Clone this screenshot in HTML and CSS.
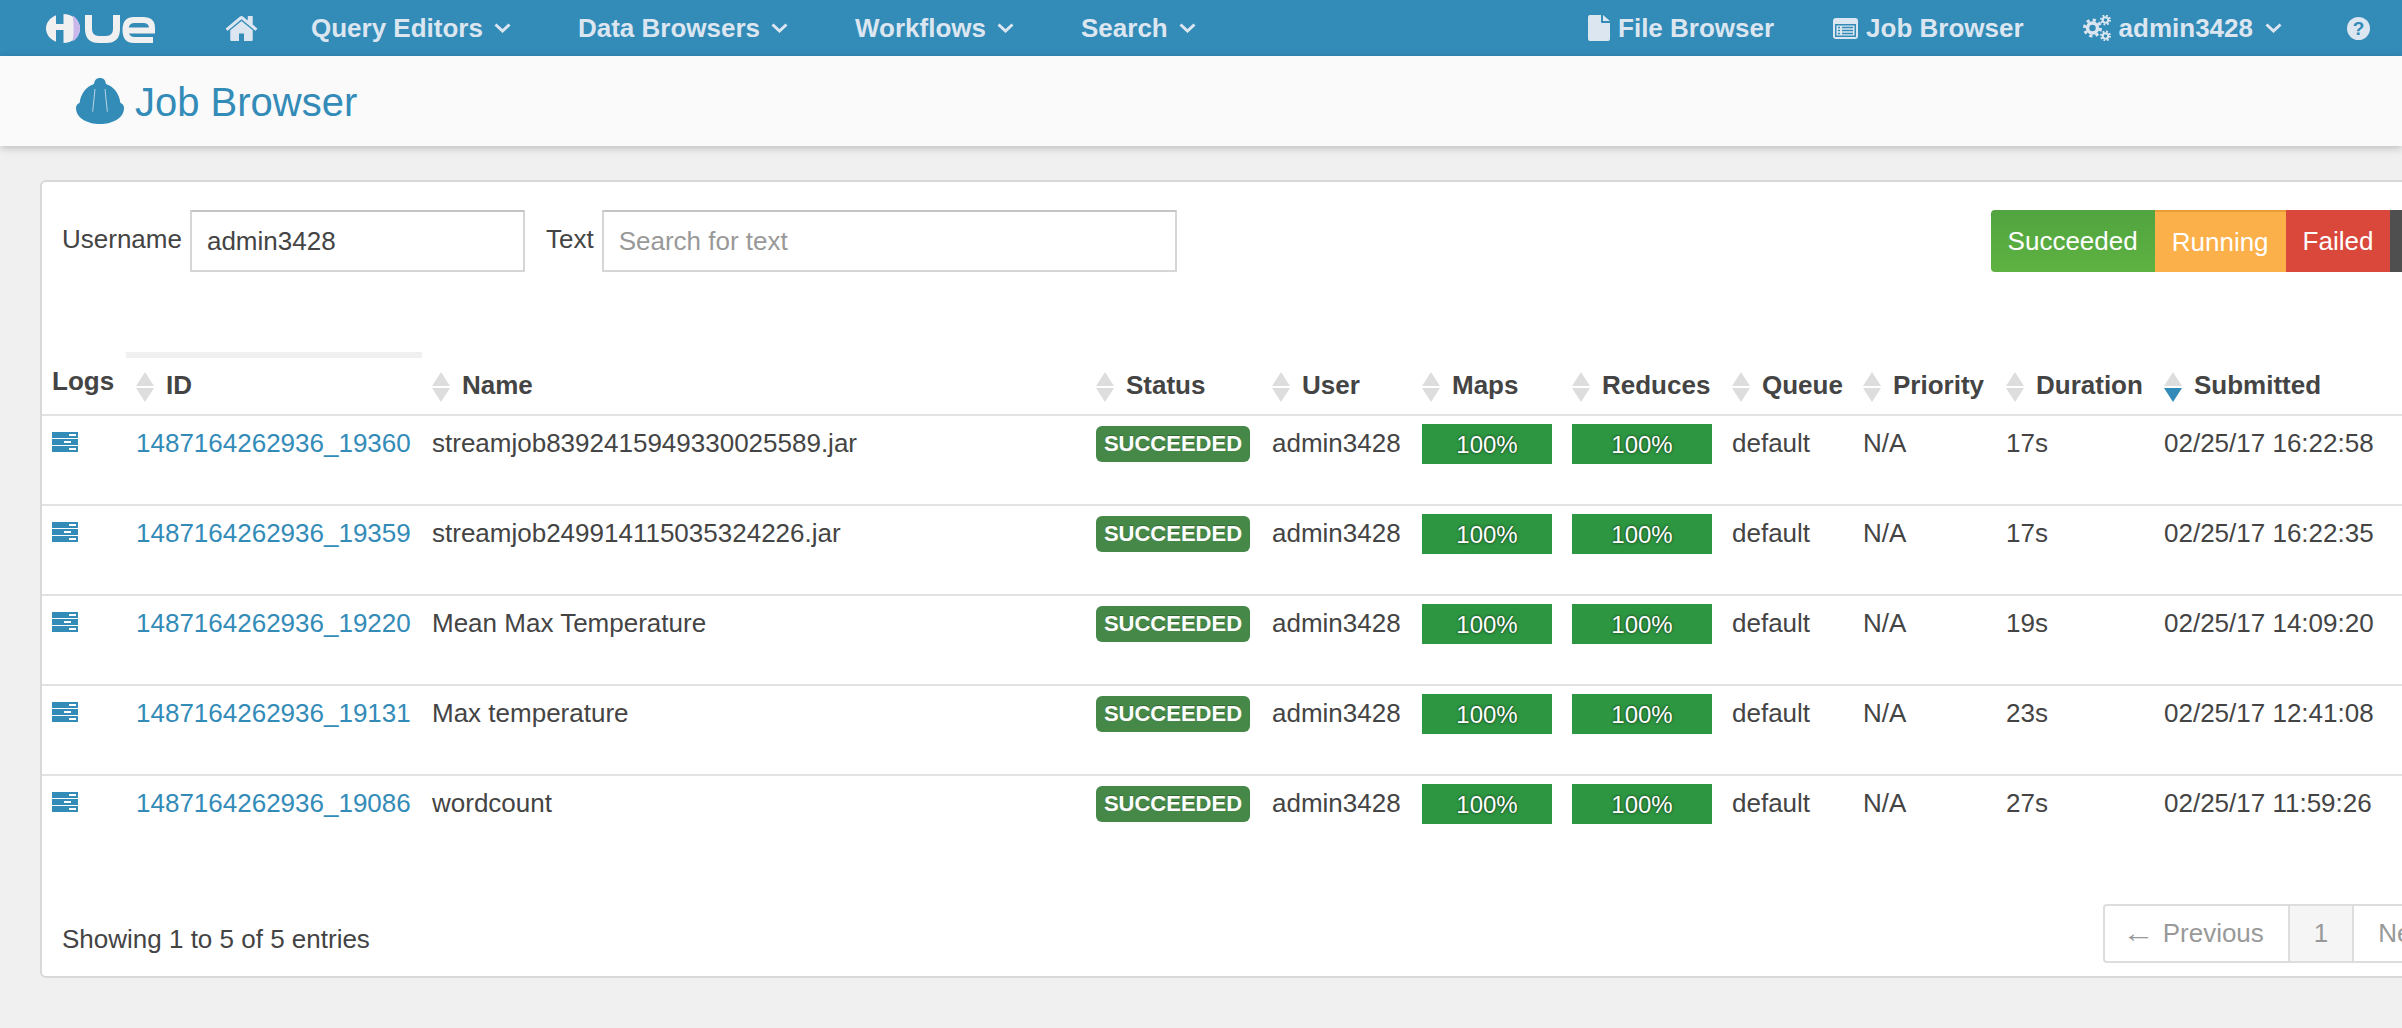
FILE: index.html

```html
<!DOCTYPE html>
<html lang="en">
<head>
    <meta charset="utf-8">
    <title>Job Browser</title>
    <link rel="stylesheet" href="styles.css">
</head>
<body>
<nav class="top-nav">
    <div class="nav-left">
        <svg class="logo" width="110" height="29" viewBox="0 0 110 29">
            <ellipse cx="17" cy="14.500" rx="17" ry="14.500" fill="#f0f0f0"/>
            <path d="M26.500 1.500 C31 4 34 9 34 14.500 C34 20 31 25 26.500 27.500 C28 20 28 9 26.500 1.500Z" fill="#c9b8ea"/>
            <rect x="10" y="0" width="7.500" height="10" fill="#338bb8"/>
            <rect x="10" y="16" width="7.500" height="13" fill="#338bb8"/>
            <path d="M42.500 1 V15 Q42.500 25.500 53 25.500 H60 Q70.500 25.500 70.500 15 V1" fill="none" stroke="#f0f0f0" stroke-width="7"/>
            <path d="M107 26 H88 Q79.500 26 79.500 16 Q79.500 6 88 6 H97 Q106 6 106 14 V16.500 H80" fill="none" stroke="#f0f0f0" stroke-width="6"/>
        </svg>
        <a class="home-link" href="#">
            <svg width="35" height="35" viewBox="0 0 1792 1792"><path fill="#dce6f0" d="M1472 992v480q0 26-19 45t-45 19h-384v-384h-256v384h-384q-26 0-45-19t-19-45v-480q0-1 .5-3t.5-3l575-474 575 474q1 2 1 6zm223-69l-62 74q-8 9-21 11h-3q-13 0-21-7l-692-577-692 577q-12 8-24 7-13-2-21-11l-62-74q-8-10-7-23.500t11-21.500l719-599q32-26 76-26t76 26l244 204v-195q0-14 9-23t23-9h192q14 0 23 9t9 23v408l219 182q10 8 11 21.500t-7 23.500z"/></svg>
        </a>
        <div class="nav-menu">
            <a class="nav-link" href="#">Query Editors <svg class="chevron" width="17" height="10" viewBox="0 0 17 10"><path d="M1.500 1.500 L8.500 8 L15.500 1.500"/></svg></a>
            <a class="nav-link" href="#">Data Browsers <svg class="chevron" width="17" height="10" viewBox="0 0 17 10"><path d="M1.500 1.500 L8.500 8 L15.500 1.500"/></svg></a>
            <a class="nav-link" href="#">Workflows <svg class="chevron" width="17" height="10" viewBox="0 0 17 10"><path d="M1.500 1.500 L8.500 8 L15.500 1.500"/></svg></a>
            <a class="nav-link" href="#">Search <svg class="chevron" width="17" height="10" viewBox="0 0 17 10"><path d="M1.500 1.500 L8.500 8 L15.500 1.500"/></svg></a>
        </div>
    </div>
    <div class="nav-right">
        <a class="nav-link tight" href="#">
            <svg width="22" height="26" viewBox="0 0 22 26"><path fill="#dce6f0" d="M2 0h11v7a1 1 0 0 0 1 1h8v16a2 2 0 0 1-2 2H2a2 2 0 0 1-2-2V2a2 2 0 0 1 2-2z M15 0l7 6h-7z"/></svg>
            File Browser
        </a>
        <a class="nav-link tight" href="#">
            <svg width="25" height="21" viewBox="0 0 25 21">
                <rect width="25" height="21" rx="3" fill="#dce6f0"/>
                <rect x="2" y="6" width="21" height="13" fill="#338bb8"/>
                <rect x="3.500" y="7.500" width="18" height="10" fill="#dce6f0"/>
                <path d="M5 9.500h2M5 12.500h2M5 15.500h2M9 9.500h11M9 12.500h11M9 15.500h11" stroke="#338bb8" stroke-width="1.400"/>
            </svg>
            Job Browser
        </a>
        <a class="nav-link tight" href="#">
            <svg width="28" height="26" viewBox="0 0 28 26" fill="none" stroke="#dce6f0">
                <circle cx="9.500" cy="13" r="5" stroke-width="3.500"/>
                <circle cx="9.500" cy="13" r="8" stroke-width="3" stroke-dasharray="3.140 3.140"/>
                <circle cx="22.500" cy="5" r="2.800" stroke-width="2"/>
                <circle cx="22.500" cy="5" r="4.500" stroke-width="2" stroke-dasharray="1.770 1.770"/>
                <circle cx="22.500" cy="21" r="2.800" stroke-width="2"/>
                <circle cx="22.500" cy="21" r="4.500" stroke-width="2" stroke-dasharray="1.770 1.770"/>
            </svg>
            admin3428 <svg class="chevron" width="17" height="10" viewBox="0 0 17 10"><path d="M1.500 1.500 L8.500 8 L15.500 1.500"/></svg>
        </a>
        <a class="help-link" href="#">?</a>
    </div>
</nav>

<header class="sub-header">
    <svg width="48" height="46" viewBox="0 0 144 138">
        <path fill="#338bb8" d="M72 0 C83 0 88 6 90 18 C114 26 130 48 133 74 C140 77 144 82 144 90 C144 120 110 138 72 138 C34 138 0 120 0 90 C0 82 4 77 11 74 C14 48 30 26 54 18 C56 6 61 0 72 0Z"/>
        <path d="M57 33 L50 101 M87 33 L94 101" stroke="#fafafa" stroke-width="2" fill="none"/>
    </svg>
    <h1 class="page-title">Job Browser</h1>
</header>

<main class="page-body">
    <section class="card">
        <div class="toolbar">
            <form class="filters">
                <label class="filter-label" for="username">Username</label>
                <input class="filter-input user-input" id="username" type="text" value="admin3428">
                <label class="filter-label text-label" for="text-search">Text</label>
                <input class="filter-input text-input" id="text-search" type="text" placeholder="Search for text">
            </form>
            <div class="btn-group">
                <button class="btn btn-succeeded">Succeeded</button>
                <button class="btn btn-running">Running</button>
                <button class="btn btn-failed">Failed</button>
                <button class="btn btn-killed">Killed</button>
            </div>
        </div>

        <table class="jobs-table">
            <colgroup>
                <col class="col-logs">
                <col class="col-id">
                <col class="col-name">
                <col class="col-status">
                <col class="col-user">
                <col class="col-maps">
                <col class="col-reduces">
                <col class="col-queue">
                <col class="col-priority">
                <col class="col-duration">
                <col class="col-submitted">
            </colgroup>
            <thead>
                <tr>
                    <th class="th-logs">Logs</th>
                    <th class="th-id"><div class="th-inner"><span class="sort"></span>ID</div></th>
                    <th><div class="th-inner"><span class="sort"></span>Name</div></th>
                    <th><div class="th-inner"><span class="sort"></span>Status</div></th>
                    <th><div class="th-inner"><span class="sort"></span>User</div></th>
                    <th><div class="th-inner"><span class="sort"></span>Maps</div></th>
                    <th><div class="th-inner"><span class="sort"></span>Reduces</div></th>
                    <th><div class="th-inner"><span class="sort"></span>Queue</div></th>
                    <th><div class="th-inner"><span class="sort"></span>Priority</div></th>
                    <th><div class="th-inner"><span class="sort"></span>Duration</div></th>
                    <th><div class="th-inner"><span class="sort sort-desc"></span>Submitted</div></th>
                </tr>
            </thead>
            <tbody>
                <tr>
                    <td><svg class="log-icon" width="26" height="20" viewBox="0 0 26 20"><path fill="#338bb8" d="M0 0h26v6H0zM0 7h26v6H0zM0 14h26v6H0z"/><path fill="#fff" d="M17 2h7v2h-7zM12 9h7v2h-7zM17 16h7v2h-7z"/></svg></td>
                    <td><a class="job-link" href="#">1487164262936_19360</a></td>
                    <td>streamjob8392415949330025589.jar</td>
                    <td><span class="badge">SUCCEEDED</span></td>
                    <td>admin3428</td>
                    <td><div class="bar">100%</div></td>
                    <td><div class="bar">100%</div></td>
                    <td>default</td>
                    <td>N/A</td>
                    <td>17s</td>
                    <td>02/25/17 16:22:58</td>
                </tr>
                <tr>
                    <td><svg class="log-icon" width="26" height="20" viewBox="0 0 26 20"><path fill="#338bb8" d="M0 0h26v6H0zM0 7h26v6H0zM0 14h26v6H0z"/><path fill="#fff" d="M17 2h7v2h-7zM12 9h7v2h-7zM17 16h7v2h-7z"/></svg></td>
                    <td><a class="job-link" href="#">1487164262936_19359</a></td>
                    <td>streamjob249914115035324226.jar</td>
                    <td><span class="badge">SUCCEEDED</span></td>
                    <td>admin3428</td>
                    <td><div class="bar">100%</div></td>
                    <td><div class="bar">100%</div></td>
                    <td>default</td>
                    <td>N/A</td>
                    <td>17s</td>
                    <td>02/25/17 16:22:35</td>
                </tr>
                <tr>
                    <td><svg class="log-icon" width="26" height="20" viewBox="0 0 26 20"><path fill="#338bb8" d="M0 0h26v6H0zM0 7h26v6H0zM0 14h26v6H0z"/><path fill="#fff" d="M17 2h7v2h-7zM12 9h7v2h-7zM17 16h7v2h-7z"/></svg></td>
                    <td><a class="job-link" href="#">1487164262936_19220</a></td>
                    <td>Mean Max Temperature</td>
                    <td><span class="badge">SUCCEEDED</span></td>
                    <td>admin3428</td>
                    <td><div class="bar">100%</div></td>
                    <td><div class="bar">100%</div></td>
                    <td>default</td>
                    <td>N/A</td>
                    <td>19s</td>
                    <td>02/25/17 14:09:20</td>
                </tr>
                <tr>
                    <td><svg class="log-icon" width="26" height="20" viewBox="0 0 26 20"><path fill="#338bb8" d="M0 0h26v6H0zM0 7h26v6H0zM0 14h26v6H0z"/><path fill="#fff" d="M17 2h7v2h-7zM12 9h7v2h-7zM17 16h7v2h-7z"/></svg></td>
                    <td><a class="job-link" href="#">1487164262936_19131</a></td>
                    <td>Max temperature</td>
                    <td><span class="badge">SUCCEEDED</span></td>
                    <td>admin3428</td>
                    <td><div class="bar">100%</div></td>
                    <td><div class="bar">100%</div></td>
                    <td>default</td>
                    <td>N/A</td>
                    <td>23s</td>
                    <td>02/25/17 12:41:08</td>
                </tr>
                <tr>
                    <td><svg class="log-icon" width="26" height="20" viewBox="0 0 26 20"><path fill="#338bb8" d="M0 0h26v6H0zM0 7h26v6H0zM0 14h26v6H0z"/><path fill="#fff" d="M17 2h7v2h-7zM12 9h7v2h-7zM17 16h7v2h-7z"/></svg></td>
                    <td><a class="job-link" href="#">1487164262936_19086</a></td>
                    <td>wordcount</td>
                    <td><span class="badge">SUCCEEDED</span></td>
                    <td>admin3428</td>
                    <td><div class="bar">100%</div></td>
                    <td><div class="bar">100%</div></td>
                    <td>default</td>
                    <td>N/A</td>
                    <td>27s</td>
                    <td>02/25/17 11:59:26</td>
                </tr>
            </tbody>
        </table>

        <div class="table-footer">
            <div class="entries-info">Showing 1 to 5 of 5 entries</div>
            <div class="pagination">
                <a class="page-item" href="#"><span class="arrow">←</span> Previous</a>
                <a class="page-item active" href="#">1</a>
                <a class="page-item" href="#">Next →</a>
            </div>
        </div>
    </section>
</main>
</body>
</html>
```

FILE: styles.css

```css
body {
    margin: 0;
    background-color: #f0f0f0;
    color: #444;
    font-family: "Liberation Sans", Arial, sans-serif;
    font-size: 26px;
    height: 100vh;
    overflow: hidden;
}

a {
    text-decoration: none;
}

/* top navigation */
.top-nav {
    display: flex;
    justify-content: space-between;
    align-items: center;
    height: 56px;
    padding: 0 32px 0 46px;
    background-color: #338bb8;
}

.nav-left,
.nav-right,
.nav-menu {
    display: flex;
    align-items: center;
}

.nav-left .logo {
    margin-right: 68px;
}

.home-link {
    display: flex;
    margin-right: 52px;
}

.nav-menu {
    gap: 67px;
}

.nav-right {
    gap: 59px;
}

.nav-link {
    display: flex;
    align-items: center;
    gap: 11px;
    color: #dce6f0;
    font-weight: bold;
}

.nav-link.tight {
    gap: 8px;
}

.chevron {
    fill: none;
    stroke: #dce6f0;
    stroke-width: 3;
}

.tight .chevron {
    margin-left: 4px;
}

.help-link {
    width: 23px;
    height: 23px;
    margin-left: 6px;
    border-radius: 50%;
    background-color: #dce6f0;
    color: #338bb8;
    font-size: 19px;
    font-weight: bold;
    line-height: 23px;
    text-align: center;
}

/* page header */
.sub-header {
    position: relative;
    display: flex;
    align-items: center;
    gap: 11px;
    height: 90px;
    padding-left: 76px;
    background-color: #fafafa;
    box-shadow: 0 2px 8px rgba(0, 0, 0, 0.22);
}

.page-title {
    margin: 2px 0 0;
    color: #338bb8;
    font-size: 40px;
    font-weight: normal;
}

/* card */
.page-body {
    padding: 34px 0 0 40px;
}

.card {
    box-sizing: border-box;
    width: 2494px;
    background-color: #fff;
    border: 2px solid #d8d8d8;
    border-radius: 6px;
    padding-bottom: 13px;
}

.toolbar {
    display: flex;
    justify-content: space-between;
    padding: 28px 44px 0 20px;
}

.filters {
    display: flex;
    align-items: center;
    margin: 0;
}

.filter-label {
    padding-bottom: 3px;
}

.text-label {
    margin-left: 21px;
}

.filter-input {
    box-sizing: border-box;
    height: 62px;
    margin-left: 8px;
    padding: 0 15px;
    background-color: #fff;
    border: 2px solid #d6d6d6;
    border-top-color: #c4c4c4;
    border-radius: 0;
    color: #444;
    font-family: inherit;
    font-size: 26px;
    outline: none;
}

.filter-input::placeholder {
    color: #999;
}

.user-input {
    width: 335px;
}

.text-input {
    width: 575px;
}

.btn-group {
    display: flex;
}

.btn {
    height: 62px;
    padding: 0 17px;
    border: none;
    color: #fff;
    font-family: inherit;
    font-size: 26px;
}

.btn-succeeded {
    background-image: linear-gradient(#51a43f, #5eb241);
    border-radius: 4px 0 0 4px;
}

.btn-running {
    background-color: #fbb04a;
    border-top: 2px solid #e79d38;
}

.btn-failed {
    background-color: #d9483a;
}

.btn-killed {
    background-color: #4f4f4f;
    border-radius: 0 4px 4px 0;
}

/* jobs table */
.jobs-table {
    width: 100%;
    margin-top: 80px;
    border-spacing: 0;
    table-layout: fixed;
}

.col-logs { width: 84px; }
.col-id { width: 296px; }
.col-name { width: 664px; }
.col-status { width: 176px; }
.col-user { width: 150px; }
.col-maps { width: 150px; }
.col-reduces { width: 160px; }
.col-queue { width: 131px; }
.col-priority { width: 143px; }
.col-duration { width: 158px; }
.col-submitted { width: 378px; }

.jobs-table th {
    padding: 12px 0 12px 10px;
    border-top: 6px solid transparent;
    border-bottom: 2px solid #e2e2e2;
    font-weight: bold;
    line-height: 30px;
    text-align: left;
    vertical-align: top;
}

.jobs-table .th-logs {
    padding-top: 8px;
    padding-bottom: 18px;
}

.jobs-table .th-id {
    border-top-color: #f0f0f0;
}

.th-inner {
    display: flex;
    align-items: flex-start;
}

.sort {
    position: relative;
    flex: none;
    width: 18px;
    height: 30px;
    margin: 2px 12px 0 0;
}

.sort::before,
.sort::after {
    content: "";
    position: absolute;
    left: 0;
    border-left: 9px solid transparent;
    border-right: 9px solid transparent;
}

.sort::before {
    top: 0;
    border-bottom: 14px solid #ddd;
}

.sort::after {
    bottom: 0;
    border-top: 14px solid #ddd;
}

.sort-desc::after {
    border-top-color: #338bb8;
}

.jobs-table td {
    height: 40px;
    padding: 8px 10px 40px;
    border-bottom: 2px solid #e2e2e2;
    line-height: 38px;
    vertical-align: top;
    white-space: nowrap;
}

.jobs-table tr:last-child td {
    border-bottom: none;
}

.log-icon {
    display: block;
    margin-top: 8px;
}

.job-link {
    color: #338bb8;
}

.badge {
    display: inline-block;
    width: 154px;
    height: 36px;
    margin: 2px 0;
    background-color: #468847;
    border-radius: 6px;
    color: #fff;
    font-size: 22px;
    font-weight: bold;
    line-height: 36px;
    text-align: center;
    text-shadow: 0 -1px 0 rgba(0, 0, 0, 0.25);
    vertical-align: top;
}

.bar {
    height: 40px;
    background-color: #2d9641;
    color: #fff;
    font-size: 24px;
    line-height: 41px;
    text-align: center;
    text-shadow: 0 0 3px rgba(0, 0, 0, 0.75);
}

/* footer */
.table-footer {
    display: flex;
    justify-content: space-between;
    align-items: flex-start;
    margin-top: 40px;
    padding: 0 41px 0 20px;
}

.entries-info {
    padding-top: 15px;
    line-height: 40px;
}

.pagination {
    display: flex;
    border: 2px solid #ddd;
    border-radius: 4px;
}

.page-item {
    padding: 0 24px;
    color: #999;
    line-height: 55px;
}

.arrow {
    display: inline-block;
    transform: scaleX(1.25);
    transform-origin: right;
}

.page-item + .page-item {
    border-left: 2px solid #ddd;
}

.page-item.active {
    background-color: #f5f5f5;
}
```
